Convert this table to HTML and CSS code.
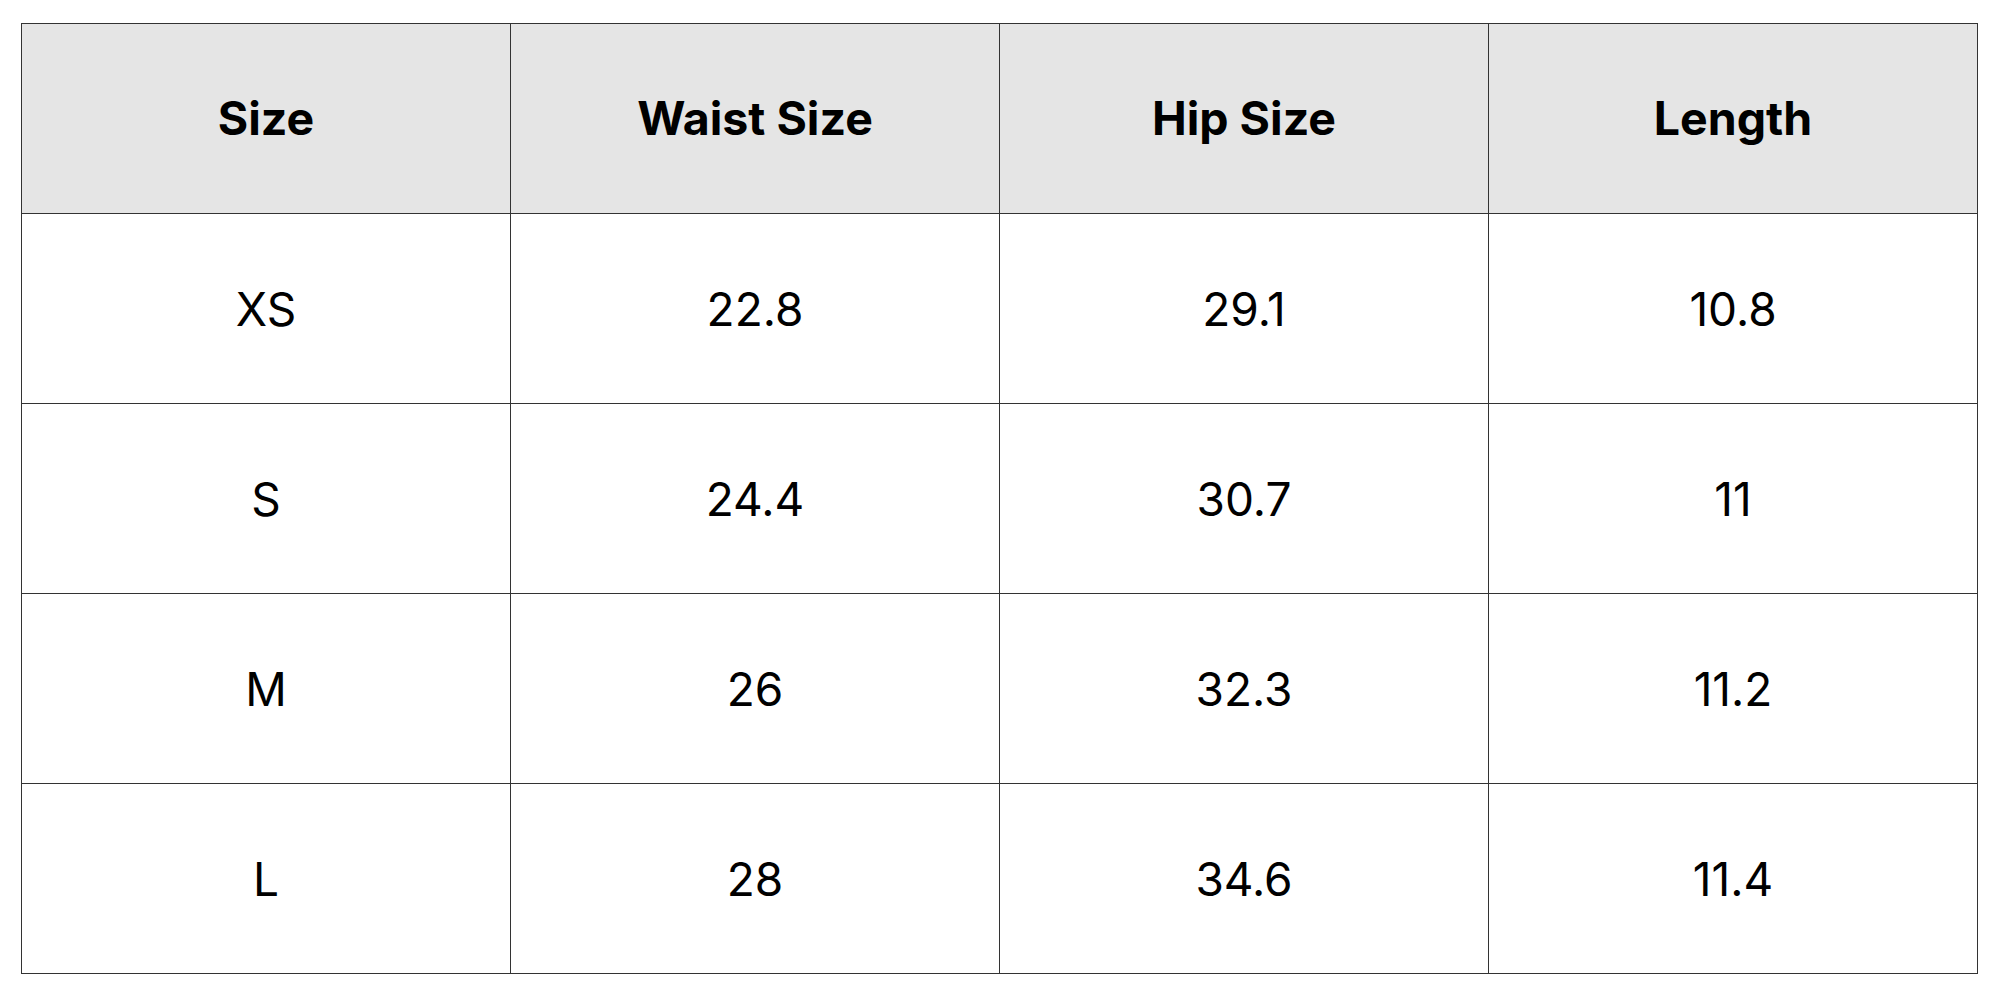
FILE: index.html
```html
<!DOCTYPE html>
<html>
<head>
<meta charset="utf-8">
<link rel="stylesheet" href="styles.css">
</head>
<body>
<div class="page">
<table class="chart">
<thead>
<tr><th>Size</th><th>Waist Size</th><th>Hip Size</th><th>Length</th></tr>
</thead>
<tbody>
<tr><td>XS</td><td>22.8</td><td>29.1</td><td>10.8</td></tr>
<tr><td>S</td><td>24.4</td><td>30.7</td><td>11</td></tr>
<tr><td>M</td><td>26</td><td>32.3</td><td>11.2</td></tr>
<tr><td>L</td><td>28</td><td>34.6</td><td>11.4</td></tr>
</tbody>
</table>
</div>
</body>
</html>
```

FILE: styles.css
```css
html, body {
  margin: 0;
  padding: 0;
  background: #ffffff;
}
.page {
  padding: 23px 0 0 21px;
}
.chart {
  border-collapse: collapse;
  table-layout: fixed;
  width: 1957px;
  font-family: Inter, "Noto Sans", sans-serif;
  color: #000000;
}
.chart th,
.chart td {
  border: 1px solid #333333;
  height: 189px;
  padding: 0;
  text-align: center;
  vertical-align: middle;
  line-height: 1;
}
.chart th {
  background: #e5e5e5;
  font-weight: 700;
  font-size: 46.5px;
}
.chart td {
  font-weight: 400;
  font-size: 46px;
}
```
